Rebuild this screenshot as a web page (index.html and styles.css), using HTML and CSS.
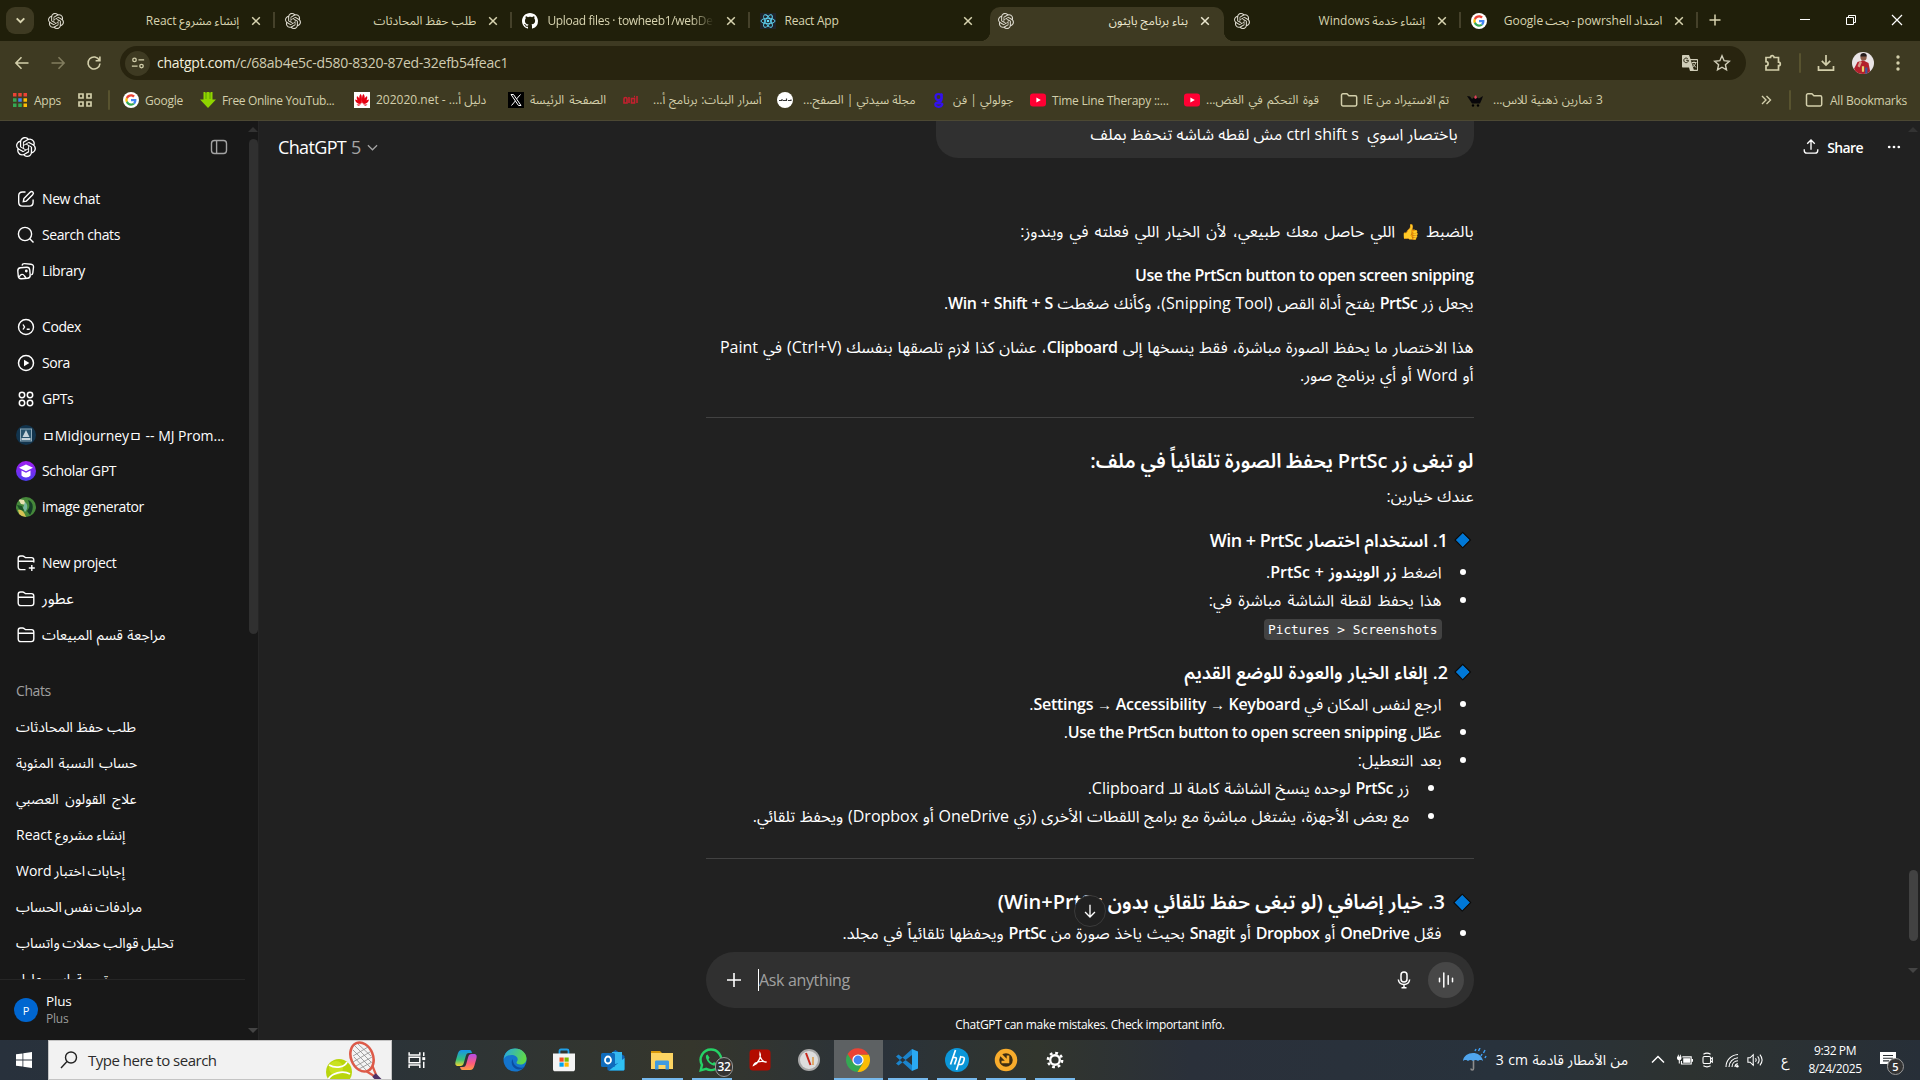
FILE: index.html
```html
<!DOCTYPE html>
<html lang="en">
<head>
<meta charset="utf-8">
<title>بناء برنامج بايثون</title>
<link rel="stylesheet" href="styles.css">
</head>
<body>
<svg class="sprite" aria-hidden="true">
  <symbol id="openai" viewBox="0 0 24 24"><path fill="currentColor" d="M22.2819 9.8211a5.9847 5.9847 0 0 0-.5157-4.9108 6.0462 6.0462 0 0 0-6.5098-2.9A6.0651 6.0651 0 0 0 4.9807 4.1818a5.9847 5.9847 0 0 0-3.9977 2.9 6.0462 6.0462 0 0 0 .7427 7.0966 5.98 5.98 0 0 0 .511 4.9107 6.051 6.051 0 0 0 6.5146 2.9001A5.9847 5.9847 0 0 0 13.2599 24a6.0557 6.0557 0 0 0 5.7718-4.2058 5.9894 5.9894 0 0 0 3.9977-2.9001 6.0557 6.0557 0 0 0-.7475-7.0729zm-9.022 12.6081a4.4755 4.4755 0 0 1-2.8764-1.0408l.1419-.0804 4.7783-2.7582a.7948.7948 0 0 0 .3927-.6813v-6.7369l2.02 1.1686a.071.071 0 0 1 .038.052v5.5826a4.504 4.504 0 0 1-4.4945 4.4944zm-9.6607-4.1254a4.4708 4.4708 0 0 1-.5346-3.0137l.142.0852 4.783 2.7582a.7712.7712 0 0 0 .7806 0l5.8428-3.3685v2.3324a.0804.0804 0 0 1-.0332.0615L9.74 19.9502a4.4992 4.4992 0 0 1-6.1408-1.6464zM2.3408 7.8956a4.485 4.485 0 0 1 2.3655-1.9728V11.6a.7664.7664 0 0 0 .3879.6765l5.8144 3.3543-2.0201 1.1685a.0757.0757 0 0 1-.071 0l-4.8303-2.7865A4.504 4.504 0 0 1 2.3408 7.872zm16.5963 3.8558L13.1038 8.364 15.1192 7.2a.0757.0757 0 0 1 .071 0l4.8303 2.7913a4.4944 4.4944 0 0 1-.6765 8.1042v-5.6772a.79.79 0 0 0-.407-.667zm2.0107-3.0231l-.142-.0852-4.7735-2.7818a.7759.7759 0 0 0-.7854 0L9.409 9.2297V6.8974a.0662.0662 0 0 1 .0284-.0615l4.8303-2.7866a4.4992 4.4992 0 0 1 6.6802 4.66zM8.3065 12.863l-2.02-1.1638a.0804.0804 0 0 1-.038-.0567V6.0742a4.4992 4.4992 0 0 1 7.3757-3.4537l-.142.0805L8.704 5.459a.7948.7948 0 0 0-.3927.6813zm1.0976-2.3654l2.602-1.4998 2.6069 1.4998v2.9994l-2.5974 1.4997-2.6067-1.4997Z"/></symbol>
  <symbol id="close" viewBox="0 0 10 10"><path d="M1.2 1.2l7.6 7.6M8.8 1.2L1.2 8.8" stroke="currentColor" stroke-width="1.5" fill="none"/></symbol>
  <symbol id="google" viewBox="0 0 48 48"><circle cx="24" cy="24" r="24" fill="#fff"/><g transform="translate(7 7) scale(.71)"><path fill="#EA4335" d="M24 9.5c3.54 0 6.71 1.22 9.21 3.6l6.85-6.85C35.9 2.38 30.47 0 24 0 14.62 0 6.51 5.38 2.56 13.22l7.98 6.19C12.43 13.72 17.74 9.5 24 9.5z"/><path fill="#4285F4" d="M46.98 24.55c0-1.57-.15-3.09-.38-4.55H24v9.02h12.94c-.58 2.96-2.26 5.48-4.78 7.18l7.73 6c4.51-4.18 7.09-10.36 7.09-17.65z"/><path fill="#FBBC05" d="M10.53 28.59c-.48-1.45-.76-2.99-.76-4.59s.27-3.14.76-4.59l-7.98-6.19C.92 16.46 0 20.12 0 24c0 3.88.92 7.54 2.56 10.78l7.97-6.19z"/><path fill="#34A853" d="M24 48c6.48 0 11.93-2.13 15.89-5.81l-7.73-6c-2.15 1.45-4.92 2.3-8.16 2.3-6.26 0-11.57-4.22-13.47-9.91l-7.98 6.19C6.51 42.62 14.62 48 24 48z"/></g></symbol>
  <symbol id="folder" viewBox="0 0 18 16"><path d="M1.5 3.2c0-.8.6-1.4 1.4-1.4h4l2 2h6.400c.8 0 1.400.6 1.400 1.400v7.400c0 .8-.6 1.400-1.400 1.400H2.900c-.8 0-1.400-.6-1.400-1.400z" fill="none" stroke="currentColor" stroke-width="1.5"/></symbol>
  <symbol id="youtube" viewBox="0 0 16 16"><rect y="1.500" width="16" height="13" rx="3" fill="#f03"/><path d="M6.400 5.500v5L10.800 8z" fill="#fff"/></symbol>
  <symbol id="project" viewBox="0 0 20 20"><path d="M2.200 14V5.300c0-1.400.9-2.300 2.300-2.300h2.200c.6 0 1 .2 1.500.6l.8.6c.3.300.7.400 1.200.400h5.300c1.400 0 2.300.9 2.300 2.300V14c0 1.600-1 2.600-2.600 2.600H4.800C3.200 16.600 2.200 15.600 2.200 14zM2.200 8.300h15.600" fill="none" stroke="currentColor" stroke-width="1.400"/></symbol>
</svg>

<div class="tabstrip">
  <button class="tabsearch"><svg viewBox="0 0 12 12"><path d="M2.500 4l3.500 3.500L9.500 4" fill="none" stroke="currentColor" stroke-width="1.800"/></svg></button>
  <div class="tabs">
    <div class="tab rtl"><svg class="fav"><use href="#openai"/></svg><span class="title" dir="rtl"><span class="wn5">إنشاء مشروع React</span></span><svg class="x"><use href="#close"/></svg></div>
    <div class="tab rtl"><svg class="fav"><use href="#openai"/></svg><span class="title" dir="rtl"><span>طلب حفظ المحادثات</span></span><svg class="x"><use href="#close"/></svg></div>
    <div class="tab"><svg class="fav white" viewBox="0 0 16 16"><path fill="currentColor" d="M8 0C3.580 0 0 3.580 0 8c0 3.540 2.290 6.530 5.470 7.590.4.070.55-.17.55-.38 0-.19-.01-.82-.01-1.490-2.010.37-2.530-.49-2.690-.94-.09-.23-.48-.94-.82-1.130-.28-.15-.68-.52-.01-.53.63-.01 1.080.58 1.230.82.72 1.210 1.870.87 2.330.66.07-.52.28-.87.51-1.070-1.780-.2-3.640-.89-3.640-3.950 0-.87.31-1.590.82-2.150-.08-.2-.36-1.020.08-2.120 0 0 .67-.21 2.200.82.64-.18 1.320-.27 2-.27s1.360.09 2 .27c1.530-1.040 2.200-.82 2.200-.82.44 1.100.16 1.920.08 2.120.51.56.82 1.270.82 2.150 0 3.070-1.870 3.750-3.650 3.950.29.25.54.73.54 1.480 0 1.070-.01 1.930-.01 2.200 0 .21.15.46.55.38A8.010 8.010 0 0 0 16 8c0-4.420-3.580-8-8-8z"/></svg><span class="title fade"><span>Upload files · towheeb1/webDe</span></span><svg class="x"><use href="#close"/></svg></div>
    <div class="tab nosep"><svg class="fav react" viewBox="0 0 16 16"><rect width="16" height="16" fill="#20232a"/><g fill="none" stroke="#61dafb" stroke-width=".9"><ellipse cx="8" cy="8" rx="7" ry="2.700"/><ellipse cx="8" cy="8" rx="7" ry="2.700" transform="rotate(60 8 8)"/><ellipse cx="8" cy="8" rx="7" ry="2.700" transform="rotate(120 8 8)"/></g><circle cx="8" cy="8" r="1.300" fill="#61dafb"/></svg><span class="title"><span>React App</span></span><svg class="x"><use href="#close"/></svg></div>
    <div class="tab active nosep rtl"><svg class="fav"><use href="#openai"/></svg><span class="title" dir="rtl"><span>بناء برنامج بايثون</span></span><svg class="x"><use href="#close"/></svg></div>
    <div class="tab rtl"><svg class="fav"><use href="#openai"/></svg><span class="title" dir="rtl"><span class="wn5">إنشاء خدمة Windows</span></span><svg class="x"><use href="#close"/></svg></div>
    <div class="tab rtl"><svg class="fav"><use href="#google"/></svg><span class="title" dir="rtl"><span class="wn10">امتداد powrshell - بحث Google</span></span><svg class="x"><use href="#close"/></svg></div>
  </div>
  <svg class="newtab" viewBox="0 0 12 12"><path d="M6 .5v11M.5 6h11" stroke="currentColor" stroke-width="1.500"/></svg>
  <div class="winctl">
    <svg viewBox="0 0 12 12"><path d="M1 5.500h10" stroke="currentColor"/></svg>
    <svg viewBox="0 0 12 12"><path d="M1.500 3.500h7v7h-7zM3.500 3.500v-2h7v7h-2" fill="none" stroke="currentColor"/></svg>
    <svg viewBox="0 0 12 12"><path d="M1 1l10 10M11 1L1 11" stroke="currentColor" stroke-width="1.200"/></svg>
  </div>
</div>

<div class="toolbar">
  <svg class="nav" viewBox="0 0 16 16"><path d="M14.500 8H2M7.500 2.300L1.900 8l5.600 5.700" fill="none" stroke="currentColor" stroke-width="1.600"/></svg>
  <svg class="nav dim" viewBox="0 0 16 16"><path d="M1.500 8H14M8.500 2.300L14.100 8l-5.600 5.700" fill="none" stroke="currentColor" stroke-width="1.600"/></svg>
  <svg class="nav" viewBox="0 0 16 16"><path d="M13.400 5.300A6 6 0 1 0 14 8.500M13.900 1.500v4.300H9.600" fill="none" stroke="currentColor" stroke-width="1.600"/></svg>
  <div class="omnibox">
    <span class="chip"><svg viewBox="0 0 16 16"><g fill="none" stroke="currentColor" stroke-width="1.500"><circle cx="4" cy="4.500" r="2"/><path d="M8.500 4.500H15M1 11.500h6.500"/><circle cx="12" cy="11.500" r="2"/></g></svg></span>
    <span class="url"><b>chatgpt.com</b>/c/68ab4e5c-d580-8320-87ed-32efb54feac1</span>
    <svg class="oi" viewBox="0 0 18 18"><path d="M2 1h6l1.500 4H16c.6 0 1 .4 1 1v10c0 .6-.4 1-1 1H9l-1-3.500H2c-.6 0-1-.4-1-1V2c0-.6.400-1 1-1z" fill="currentColor"/><path d="M9.800 6.200l3 9.600H16V6.200z" fill="#28240f"/><path d="M7.400 6.300H5.200M7.400 6.400A2.300 2.300 0 1 1 6.700 4.700" stroke="#28240f" fill="none"/><path d="M10.800 8.500h4.700M13 7.500v1M14.700 8.500c-.3 2-1.500 3.500-3 4.500M11.800 9.500c.6 1.500 1.800 2.800 3.400 3.800" stroke="currentColor" fill="none"/></svg>
    <svg class="oi" viewBox="0 0 18 18"><path d="M9 1.800l2.100 4.900 5.200.5-3.900 3.500 1.100 5.200L9 13.200l-4.500 2.700 1.100-5.200-3.900-3.500 5.200-.5z" fill="none" stroke="currentColor" stroke-width="1.400"/></svg>
  </div>
  <div class="tools">
    <svg viewBox="0 0 18 18"><path d="M2 3.500h4.500a1.800 1.800 0 0 1 3.600 0h4.400v4.600a1.800 1.800 0 0 1 0 3.600v4.300H2v-4.200a2.100 2.100 0 0 0 0-4.200z" fill="none" stroke="currentColor" stroke-width="1.700"/></svg>
    <i class="vsep"></i>
    <svg viewBox="0 0 18 18"><path d="M9 1v9.500M4.800 6.800L9 11l4.200-4.200M1.500 12v4.200h15V12" fill="none" stroke="currentColor" stroke-width="1.700"/></svg>
    <svg class="me" viewBox="0 0 20 20"><clipPath id="mc"><circle cx="10" cy="10" r="10"/></clipPath><g clip-path="url(#mc)"><path fill="#e9e4e6" d="M0 0h20v20H0z"/><path fill="#b3202c" d="M5 9l5-1.500L15 10l2 10H3l-1-5z"/><circle cx="10.500" cy="5" r="2.800" fill="#8a5a48"/><path fill="#251c1c" d="M7.500 4c0-4 6-4 6 0z"/><path fill="#d79a88" d="M7 8l2 1-2 5-2-1z"/><path fill="#e8d36c" d="M9 13h2v5H9z"/><path fill="#3c55a0" d="M12 14h2v6h-2z"/></g></svg>
    <svg viewBox="0 0 18 18"><g fill="currentColor"><circle cx="9" cy="3" r="1.700"/><circle cx="9" cy="9" r="1.700"/><circle cx="9" cy="15" r="1.700"/></g></svg>
  </div>
</div>

<div class="bookmarks">
  <span class="bm"><svg viewBox="0 0 16 16"><path fill="#ea4335" d="M1 1h3.500v3.500H1zM6.250 1h3.500v3.500h-3.500zM11.500 1H15v3.500h-3.500z"/><path fill="#34a853" d="M1 6.250h3.500v3.500H1zM1 11.500h3.500V15H1z"/><path fill="#4285f4" d="M6.250 6.250h3.500v3.500h-3.500z"/><path fill="#34a853" d="M6.250 11.500h3.500V15h-3.500z"/><path fill="#fbbc05" d="M11.500 6.250H15v3.500h-3.500zM11.500 11.500H15V15h-3.500z"/></svg><span>Apps</span></span>
  <span class="bm"><svg viewBox="0 0 16 16"><path d="M2 2h4v4H2zM10 2h4v4h-4zM2 10h4v4H2zM10 10h4v4h-4z" fill="none" stroke="currentColor" stroke-width="1.700"/></svg></span>
  <i class="vsep"></i>
  <span class="bm"><svg><use href="#google"/></svg><span>Google</span></span>
  <span class="bm"><svg viewBox="0 0 16 16"><path fill="#8fd400" d="M3.500 0h2v1h1V0h3v1h1V0h2v7.500H16L8 16 0 7.500h3.500z"/><path fill="#5f9e00" d="M5.500 1h1v6h-1zM9.500 1h1v6h-1z"/></svg><span class="snug">Free Online YouTub...</span></span>
  <span class="bm"><svg viewBox="0 0 16 16"><path fill="#fff" d="M0 0h16v16H0z"/><g fill="#e60012"><path d="M7.700 11.500C5 9 4.500 4 6.500 2c1.500 1 1.800 5 1.200 9.500zM8.300 11.500C11 9 11.500 4 9.500 2 8 3 7.700 7 8.300 11.500zM7.200 11.700C3.500 9.500 2 6.500 3 4c2.500 1.500 3.700 4.500 4.200 7.700zM8.800 11.700C12.500 9.500 14 6.500 13 4c-2.500 1.500-3.700 4.500-4.200 7.700zM6.800 12C3.500 12 1.300 10 1 7.500c2.700.4 4.800 2.200 5.800 4.500zM9.200 12c3.300 0 5.500-2 5.800-4.500-2.700.4-4.800 2.200-5.800 4.500zM7 12.500c-1.500 1.500-3.500 1.500-4.500 0zM9 12.500c1.500 1.500 3.500 1.500 4.500 0z"/></g></svg><span class="ar" dir="ltr">202020.net - دليل أ...&rlm;</span></span>
  <span class="bm"><svg viewBox="0 0 16 16"><path d="M0 0h16v16H0z"/><path d="M3 2.500h2.500l7.500 11h-2.500zM12.500 2.500l-4 4.500M3.500 13.500l4-4.700" stroke="#fff" fill="none"/></svg><span class="ws20" dir="rtl">الصفحة الرئيسة</span></span>
  <span class="bm far"><svg viewBox="0 0 16 16"><path d="M1 7c0-2 3-2 3 0v4H1zM6 5v6M8.500 6.500h3v4.500h-3zM14 4v7M11 4.500h1" fill="none" stroke="#c4202f" stroke-width="1.600"/></svg><span class="ws5" dir="rtl">أسرار البنات: برنامج أ...</span></span>
  <span class="bm mid"><svg viewBox="0 0 16 16"><circle cx="8" cy="8" r="8" fill="#fff"/><path d="M2 8.500h3V7m1 1.500h3.500V6.500M11 8.500h3V7.500" stroke="#333" stroke-width="1.200" fill="none"/></svg><span dir="rtl">مجلة سيدتي | الصفح...</span></span>
  <span class="bm"><svg viewBox="0 0 16 16"><g fill="none" stroke="#3311ee" stroke-width="2.200"><circle cx="7.500" cy="5" r="3"/><path d="M11 1.500c-1 2 .5 5-1 7.500-1.500 1.500-5 1-5.500 2.500h6c1.500 0 1 3-2.500 3.300-3 .2-4-1.300-3.200-2.500"/></g></svg><span dir="rtl">جولولي | فن</span></span>
  <span class="bm"><svg><use href="#youtube"/></svg><span>Time Line Therapy ::...</span></span>
  <span class="bm"><svg><use href="#youtube"/></svg><span class="ws15" dir="rtl">قوة التحكم في الغض...</span></span>
  <span class="bm wide"><svg><use href="#folder"/></svg><span dir="rtl">تمّ الاستيراد من IE</span></span>
  <span class="bm mid"><svg viewBox="0 0 16 16"><path fill="#08070a" d="M0 4l3 .5 2 2.500 3-2.500 4 2 4-2.500-1 3-2 4.500H5L2 7z"/><path fill="#e0405a" d="M7 5l2-2 1 3-2 1z"/><circle cx="6" cy="13.500" r="1.200"/><circle cx="11" cy="13.500" r="1.200"/></svg><span class="ws5" dir="rtl">3 تمارين ذهنية للاس...</span></span>
  <svg class="more" viewBox="0 0 12 12"><path d="M2 2l4 4-4 4M6.500 2l4 4-4 4" fill="none" stroke="currentColor" stroke-width="1.400"/></svg>
  <i class="vsep"></i>
  <span class="bm wide last"><svg><use href="#folder"/></svg><span>All Bookmarks</span></span>
</div>

<div class="app">
  <aside class="sidebar">
    <div class="side-main">
      <div class="side-list">
        <div class="side-head"><svg class="logo"><use href="#openai"/></svg><svg class="panel" viewBox="0 0 20 20"><rect x="2.500" y="3.500" width="15" height="13" rx="3" fill="none" stroke="currentColor" stroke-width="1.400"/><path d="M7.600 3.500v13" stroke="currentColor" stroke-width="1.400"/></svg></div>
        <nav class="group">
          <a><svg viewBox="0 0 20 20"><g fill="none" stroke="currentColor" stroke-width="1.400"><path d="M9.500 3H6.500C4 3 2.700 4.300 2.700 6.800v6.500c0 2.500 1.300 3.800 3.800 3.800h6.800c2.500 0 3.800-1.300 3.800-3.800v-2.900"/><path d="M7.300 12.700l.6-3.100 6.200-6.300c.9-.9 2-.9 2.700-.2.800.8.800 1.800-.1 2.700l-6.300 6.300z"/></g></svg><span>New chat</span></a>
          <a><svg viewBox="0 0 20 20"><g fill="none" stroke="currentColor" stroke-width="1.400"><circle cx="9" cy="9" r="6.600"/><path d="M13.800 13.800l3.700 3.700"/></g></svg><span>Search chats</span></a>
          <a><svg viewBox="0 0 20 20"><g fill="none" stroke="currentColor" stroke-width="1.400"><rect x="2" y="6.500" width="12" height="11" rx="3" transform="rotate(-5 8 12)"/><path d="M6 4.500c.3-1.400 1.200-2 2.600-1.900l6.400.6c1.800.2 2.700 1.300 2.500 3l-.7 5.800c-.1 1-.7 1.700-1.600 1.900M3 16c2-3.300 4-3.400 5.500-1l1.500 2"/><circle cx="10.300" cy="10" r=".7"/></g></svg><span>Library</span></a>
        </nav>
        <nav class="group">
          <a><svg viewBox="0 0 20 20"><g fill="none" stroke="currentColor" stroke-width="1.400"><circle cx="10" cy="10" r="7.500"/><path d="M7 7.500L8.500 10 7 12.500M10.700 12.300h3"/></g></svg><span>Codex</span></a>
          <a><svg viewBox="0 0 20 20"><circle cx="10" cy="10" r="7.500" fill="none" stroke="currentColor" stroke-width="1.500"/><path fill="currentColor" d="M8 6.700v6.600l5.400-3.300z"/></svg><span>Sora</span></a>
          <a><svg viewBox="0 0 20 20"><g fill="none" stroke="currentColor" stroke-width="1.500"><circle cx="6" cy="6" r="2.700"/><circle cx="14" cy="6" r="2.700"/><circle cx="6" cy="14" r="2.700"/><circle cx="14" cy="14" r="2.700"/></g></svg><span>GPTs</span></a>
          <a><svg viewBox="0 0 20 20"><circle cx="10" cy="10" r="10" fill="#12344d"/><rect x="4.500" y="4" width="11" height="12" fill="#27536d" stroke="#8ea9b9"/><path d="M10 5l3.500 7h-7zM5.500 13h9v2h-9z" fill="#c5d3db"/></svg><span class="loose">ㅁMidjourneyㅁ -- MJ Prom...</span></a>
          <a><svg viewBox="0 0 20 20"><defs><linearGradient id="sg" x2="0" y2="1"><stop stop-color="#a31df0"/><stop offset="1" stop-color="#4b3cf0"/></linearGradient></defs><circle cx="10" cy="10" r="10" fill="url(#sg)"/><path d="M10 3.500l7 3.300-7 3.500-7-3.500z" fill="#fff"/><path d="M5.500 9.500l4.500 2.300 4.500-2.300v5c-2 2.500-7 2.500-9 0z" fill="#fff"/></svg><span>Scholar GPT</span></a>
          <a><svg viewBox="0 0 20 20"><clipPath id="ig"><circle cx="10" cy="10" r="10"/></clipPath><g clip-path="url(#ig)"><path fill="#45883a" d="M0 0h20v20H0z"/><path fill="#e8e2b0" d="M2 2l6 1 2 5-5-1z"/><path fill="#143c28" d="M12 3c6 2 6 9 2 15l-3-4c3-3 3-7 1-11z"/><path fill="#79b8a0" d="M9 5c3 2 3 7 0 10l-2-4z"/><path fill="#d6c255" d="M2 13c4-1 6 2 8 7H4z"/><path fill="#1b5127" d="M1 8l5 1 2 5-5-2z"/></g></svg><span>image generator</span></a>
        </nav>
        <nav class="group">
          <a><svg viewBox="0 0 20 20"><g fill="none" stroke="currentColor" stroke-width="1.400"><path d="M9.500 16.600H4.800C3.200 16.600 2.200 15.600 2.200 14V5.300c0-1.400.9-2.300 2.300-2.300h2.200c.6 0 1 .2 1.500.6l.8.6c.3.300.7.400 1.200.400h5.300c1.400 0 2.300.9 2.300 2.300v2.600M2.200 8.300h15.600M15.800 12v6M12.800 15h6"/></g></svg><span>New project</span></a>
          <a><svg><use href="#project"/></svg><span class="bigger" dir="rtl">عطور</span></a>
          <a><svg><use href="#project"/></svg><span class="ws10" dir="rtl">مراجعة قسم المبيعات</span></a>
        </nav>
        <nav class="group">
          <a class="label"><span>Chats</span></a>
          <a><span dir="rtl">طلب حفظ المحادثات</span></a>
          <a><span class="ws15" dir="rtl">حساب النسبة المئوية</span></a>
          <a><span class="ws30" dir="rtl">علاج القولون العصبي</span></a>
          <a><span class="wn5" dir="rtl">إنشاء مشروع React</span></a>
          <a><span class="wn10" dir="rtl">إجابات اختبار Word</span></a>
          <a><span class="wn10" dir="rtl">مرادفات نفس الحساب</span></a>
          <a><span class="wn10" dir="rtl">تحليل قوالب حملات واتساب</span></a>
          <a><span class="ws20" dir="rtl">ترجمة اسم علياء</span></a>
        </nav>
      </div>
      <div class="account"><span class="avatar">P</span><div><p>Plus</p><p class="plan">Plus</p></div></div>
    </div>
    <div class="side-scroll"><i class="up"></i><i class="thumb"></i><i class="down"></i></div>
  </aside>

  <main class="main">
    <header class="top">
      <div class="model">ChatGPT <span>5</span><svg viewBox="0 0 12 12"><path d="M1 3.500l5 5 5-5" fill="none" stroke="currentColor" stroke-width="1.300"/></svg></div>
      <div class="share"><svg viewBox="0 0 20 20"><path d="M10 13V2.500M5.800 6.500L10 2.300l4.200 4.200M2.500 12.500v1.300c0 2 1 3 3 3h9c2 0 3-1 3-3v-1.300" fill="none" stroke="currentColor" stroke-width="1.500"/></svg><b>Share</b><svg class="dots" viewBox="0 0 20 20"><g fill="currentColor"><circle cx="4" cy="10" r="1.700"/><circle cx="10" cy="10" r="1.700"/><circle cx="16" cy="10" r="1.700"/></g></svg></div>
    </header>
    <div class="thread" dir="rtl">
      <div class="bubble"><span>باختصار اسوي&nbsp; ctrl shift s مش لقطه شاشه تنحفظ بملف</span></div>
      <article>
        <p><span class="ws20">بالضبط <span class="emoji">👍</span> اللي حاصل معك طبيعي، لأن الخيار اللي فعلته في ويندوز:</span></p>
        <p><b>Use the PrtScn button to open screen snipping</b><br><span class="ws5">يجعل زر <b>PrtSc</b> يفتح أداة القص (Snipping Tool)، وكأنك ضغطت <b>Win + Shift + S</b>.</span></p>
        <p><span class="ws10">هذا الاختصار ما يحفظ الصورة مباشرة، فقط ينسخها إلى <b>Clipboard</b>، عشان كذا لازم تلصقها بنفسك (Ctrl+V) في Paint</span><br><span class="ws10">أو Word أو أي برنامج صور.</span></p>
        <hr>
        <h2 class="wn5">لو تبغى زر PrtSc يحفظ الصورة تلقائياً في ملف:</h2>
        <p><span class="ws5">عندك خيارين:</span></p>
        <h3><i class="gem"></i><span>1. استخدام اختصار <bdi>Win + PrtSc</bdi></span></h3>
        <ul>
          <li><span class="ws5">اضغط <b class="ar">زر الويندوز + PrtSc</b>.</span></li>
          <li><span class="ws20">هذا يحفظ لقطة الشاشة مباشرة في:</span><br><code>Pictures &gt; Screenshots</code></li>
        </ul>
        <h3><i class="gem"></i><span class="ws5">2. إلغاء الخيار والعودة للوضع القديم</span></h3>
        <ul>
          <li><span>ارجع لنفس المكان في <b class="path" dir="ltr">Settings <i>→</i> Accessibility <i>→</i> Keyboard</b>.</span></li>
          <li><span>عطّل <b>Use the PrtScn button to open screen snipping</b>.</span></li>
          <li><span class="ws30">بعد التعطيل:</span>
            <ul>
              <li><span class="ws5">زر <b>PrtSc</b> لوحده ينسخ الشاشة كاملة للـ Clipboard.</span></li>
              <li><span class="ws5">مع بعض الأجهزة، يشتغل مباشرة مع برامج اللقطات الأخرى (زي OneDrive أو Dropbox) ويحفظ تلقائي.</span></li>
            </ul>
          </li>
        </ul>
        <hr>
        <h2 class="numbered"><i class="gem big"></i><span>3. خيار إضافي (لو تبغى حفظ تلقائي بدون Win+PrtSc)</span></h2>
        <ul>
          <li><span class="ws8">فعّل <b>OneDrive</b> أو <b>Dropbox</b> أو <b>Snagit</b> بحيث ياخذ صورة من <b>PrtSc</b> ويحفظها تلقائياً في مجلد.</span></li>
        </ul>
      </article>
    </div>
    <div class="dock">
      <button class="jump"><svg viewBox="0 0 20 20"><path d="M10 3v13.500M4.500 11.200L10 16.700l5.500-5.500" fill="none" stroke="currentColor" stroke-width="1.500"/></svg></button>
      <div class="composer">
        <svg viewBox="0 0 20 20"><path d="M10 3v14M3 10h14" stroke="currentColor" stroke-width="1.600"/></svg>
        <span class="ph">Ask anything</span>
        <svg viewBox="0 0 20 20"><g fill="none" stroke="currentColor" stroke-width="1.500"><rect x="7" y="2" width="6" height="10" rx="3"/><path d="M4.300 9.500c.5 3.300 2.600 5 5.700 5s5.200-1.700 5.700-5M10 14.500v3M7.500 17.700h5"/></g></svg>
        <span class="voice"><svg viewBox="0 0 20 20"><path d="M3.500 8.300v3.400M7.800 3v14M12.200 5.800v8.400M16.500 8.300v3.400" stroke="currentColor" stroke-width="1.500" stroke-linecap="round"/></svg></span>
      </div>
      <p class="note"><span>ChatGPT can make mistakes. Check important info.</span></p>
    </div>
    <div class="page-scroll"><i class="up"></i><i class="thumb"></i><i class="down"></i></div>
  </main>
</div>

<footer class="taskbar">
  <span class="start"><svg viewBox="0 0 16 16"><path fill="#fff" d="M0 2.300l6.500-.9v6.200H0zM7.300 1.300L16 0v7.600H7.300zM0 8.400h6.500v6.200L0 13.700zM7.300 8.400H16V16l-8.700-1.300z"/></svg></span>
  <div class="search">
    <svg class="mag" viewBox="0 0 18 18"><g fill="none" stroke="#222" stroke-width="1.400"><circle cx="11" cy="6.500" r="5.500"/><path d="M7 10.500L1 17"/></g></svg>
    <span>Type here to search</span>
    <svg class="sport" viewBox="0 0 60 38"><g><ellipse cx="37" cy="16" rx="11" ry="15" transform="rotate(-22 37 16)" fill="#f4f4f4" stroke="#dd5a48" stroke-width="2.600"/><g stroke="#8b8b8b" stroke-width=".8"><path d="M28 9l17 17M29 4l17 17M33 3l13 12M29 16l12 13M28 21l17-10M28 15l15-9M31 25l16-9M34 28l13-7"/></g><path d="M41 30l8 5M47.500 25l4 10" stroke="#dd5a48" stroke-width="2.200"/><path d="M49 34l6 6" stroke="#4d3166" stroke-width="5"/></g><circle cx="14" cy="31" r="13" fill="#b9d50c"/><circle cx="11" cy="27" r="7" fill="#d2e72a" opacity=".7"/><path d="M4 24c7 4 16 2 18-3M3 39c3-7 15-10 22-6" fill="none" stroke="#fff" stroke-width="1.800"/></svg>
  </div>
  <div class="pins">
    <span><svg viewBox="0 0 16 16"><g fill="none" stroke="#fff" stroke-width="1.300"><path d="M1 1v2.500h9.500V1M1 15v-2.500h9.500V15M1 5.500h9.500v5H1zM14 1v3.500M14 9.500V15"/></g><path fill="#fff" d="M12.700 5.500h2.600v2.600h-2.600z"/></svg></span>
    <span><svg class="l" viewBox="0 0 24 24"><defs><linearGradient id="c1" x2="0" y2="1"><stop stop-color="#1593ec"/><stop offset=".6" stop-color="#35c27a"/><stop offset="1" stop-color="#f5d432"/></linearGradient><linearGradient id="c2" x2="0" y2="1"><stop stop-color="#b44be8"/><stop offset=".6" stop-color="#ff5c7a"/><stop offset="1" stop-color="#ff9c45"/></linearGradient></defs><path d="M8 2h7.500c1.500 0 2 1 2.500 3h-3c-2 0-2.600 1-3.200 3l-2 7c-.5 2-1.500 3-3.500 3H4c-3 0-3-2.500-2.300-5l2-7C4.600 3.300 5.500 2 8 2z" fill="url(#c1)"/><path d="M16 22H8.500C7 22 6.500 21 6 19h3c2 0 2.600-1 3.200-3l2-7c.5-2 1.500-3 3.500-3H20c3 0 3 2.500 2.300 5l-2 7c-.9 2.700-1.800 4-4.300 4z" fill="url(#c2)"/></svg></span>
    <span><svg class="l" viewBox="0 0 24 24"><defs><linearGradient id="e1" y2=".3"><stop stop-color="#23a5e8"/><stop offset="1" stop-color="#5fd84a"/></linearGradient></defs><circle cx="12" cy="12" r="11.500" fill="#1474cc"/><path d="M.8 11C1.500 4.500 6 .5 12 .5c7 0 11.500 5 11.500 10 0 4-3 6-6 6-2.500 0-4-1-4-2s1.200-1.300 1.200-3.300C14.700 9 12 7 8.500 7 5 7 2 8.500.8 11z" fill="url(#e1)"/><path d="M9.500 11c-2.500 4.500 1 10.500 6.500 10.500 2 0 4-.8 6-2.500-4 1.500-11.500 1-12.500-8z" fill="#0c4da0"/></svg></span>
    <span><svg class="l" viewBox="0 0 24 24"><path d="M7.500 6V3c0-1 .5-1.500 1.500-1.500h6c1 0 1.500.5 1.500 1.500v3" fill="none" stroke="#20a0e8" stroke-width="1.800"/><path d="M1 5.500h22V21c0 1.500-.8 2.300-2.300 2.300H3.300C1.800 23.300 1 22.500 1 21z" fill="#f4f4f4"/><path fill="#f25022" d="M7.500 9.500h4.200v4.200H7.500z"/><path fill="#7fba00" d="M12.500 9.500h4.200v4.200h-4.200z"/><path fill="#00a4ef" d="M7.500 14.500h4.200v4.200H7.500z"/><path fill="#ffb900" d="M12.500 14.500h4.200v4.200h-4.200z"/></svg></span>
    <span><svg class="l" viewBox="0 0 24 24"><path d="M6 8l8.500-6L23.500 8v13c0 1-.6 1.600-1.600 1.600H8c-1 0-1.600-.6-1.600-1.600z" fill="#1066b8"/><path d="M11 4h10v10l-10 3z" fill="#35b8f0"/><path d="M23.500 10v11c0 1-.6 1.600-1.600 1.600H8L23.500 10z" fill="#2fc0f2"/><rect y="5" width="14" height="14" rx="1.500" fill="#0f6cbd"/><ellipse cx="7" cy="12" rx="3" ry="3.500" fill="none" stroke="#fff" stroke-width="1.800"/></svg></span>
    <span class="run"><svg class="l" viewBox="0 0 24 24"><path d="M1 3h9l2 2H1z" fill="#d99a0a"/><path d="M1 5h22v16H1z" fill="#fcd462"/><path d="M5 14c0-1 .5-1.500 1.500-1.500h11c1 0 1.500.5 1.500 1.500v7.500h-3.500V17h-7v4.500H5z" fill="#3f9be0"/></svg></span>
    <span class="run"><svg class="l" viewBox="0 0 24 24"><path d="M12 1.500a10.300 10.300 0 0 0-9 15.400L1.700 22.300l5.500-1.400A10.300 10.300 0 1 0 12 1.500z" fill="none" stroke="#25d366" stroke-width="2.400"/><path d="M8.500 6.500c-1.500.3-2 2-1.300 4 1.200 3.500 4 6.200 7.300 7 2 .3 3-.7 3.200-2l-2.700-1.600-1.300 1.400c-2-.9-3.300-2.300-4.200-4.100l1.100-1.500z" fill="#25d366"/></svg><em class="badge">32</em></span>
    <span><svg class="l" viewBox="0 0 24 24"><rect x="1.500" y="1.500" width="21" height="21" rx="3.500" fill="#b30b00"/><path d="M5.500 17.500c1-3.500 7-5 13-3.500-4 .8-7-5-6.500-8.500 1.200 3-1.500 10-6.500 12z" fill="none" stroke="#fff" stroke-width="1.300"/></svg></span>
    <span><svg class="l" viewBox="0 0 24 24"><circle cx="12" cy="12" r="11" fill="#a8a8a8"/><circle cx="12" cy="12" r="9" fill="#ddd"/><path d="M9 5l4.500 12" stroke="#c8271c" stroke-width="2"/><path d="M16 9v8" stroke="#dd9740" stroke-width="1.500"/></svg></span>
    <span class="run on"><svg class="l" viewBox="0 0 24 24"><path d="M12 12L1.600 6A12 12 0 0 0 11.500 24L17 15z" fill="#34a853"/><path d="M12 12V6.500h10.700A12 12 0 0 1 11.500 24L17 15z" fill="#fbbc05"/><path d="M1.600 6A12 12 0 0 1 22.500 6.500H12L7 14.500z" fill="#ea4335"/><circle cx="12" cy="12" r="5.600" fill="#fff"/><circle cx="12" cy="12" r="4.400" fill="#4285f4"/></svg></span>
    <span class="run"><svg class="l" viewBox="0 0 24 24"><path d="M17 1l6 2.500v17L17 23z" fill="#2aa9f3"/><path d="M17 1v6L3.500 17.500 1 15.500zM17 23v-6L3.500 6.500 1 8.500z" fill="#1b84cc"/></svg></span>
    <span class="run"><svg class="l" viewBox="0 0 24 24"><circle cx="12" cy="12" r="12" fill="#0b96d8"/><path d="M10.500 2L5.500 16.500M8 9.500h2c1.500 0 1.500 1 1.200 2l-1.700 5M16 8L11.500 22M15.500 9h2c2 0 2 1.500 1.500 3-.7 3-1.300 4.500-3 4.500h-2.500" fill="none" stroke="#fff" stroke-width="1.700"/></svg></span>
    <span class="run"><svg class="l" viewBox="0 0 24 24"><circle cx="12" cy="12" r="9" fill="#3d2c12" stroke="#f8ac2c" stroke-width="4.500"/><path d="M5 5l8 8M14 7.500V14H7.500" stroke="#f8ac2c" stroke-width="2.600" fill="none"/></svg></span>
    <span class="run"><svg viewBox="0 0 20 20"><circle cx="10" cy="10" r="5.300" fill="none" stroke="#fff" stroke-width="2.600"/><circle cx="10" cy="10" r="7.900" fill="none" stroke="#fff" stroke-width="2.800" stroke-dasharray="3.100 3.100"/></svg></span>
  </div>
  <div class="tray">
    <svg class="umb" viewBox="0 0 24 24"><path d="M10.500 8v12.500c0 2-2.500 2-2.500 0" fill="none" stroke="#8c8c8c" stroke-width="1.600"/><path d="M0 13C1 3 18 2 20 13c-1-1.500-4-1.500-5 0-1.500-1.500-3.500-1.500-5 0-1.500-1.500-3.500-1.500-5 0-1-1.500-4-1.500-5 0z" fill="#4fa5ee"/><path d="M13 1l-1 2M17 0l-1.500 3M22 2l-1.500 3M19 6l-1 2M23 8l-1 2" stroke="#3f9df0" stroke-width="1.500"/></svg>
    <span class="weather ws10" dir="rtl">من الأمطار قادمة <bdi dir="ltr">3 cm</bdi></span>
    <svg class="t1" viewBox="0 0 16 16"><path d="M2 10.500l6-6 6 6" fill="none" stroke="#fff" stroke-width="1.500"/></svg>
    <svg viewBox="0 0 18 16"><path d="M6 4.500h10v8H5V9" fill="none" stroke="#fff" stroke-width="1.200"/><path d="M7 6h8v5.200H7zM16.500 7H18v3h-1.500zM0 4h5v2c0 1-.8 2-1.800 2.200V12H2V8.200C.8 8 0 7 0 6zM1 2h1v2H1zM3.300 2h1v2h-1z" fill="#fff"/></svg>
    <svg viewBox="0 0 16 18"><path d="M4 2.500c2.500-1.500 5.500-1.500 8 0M4 15.500c2.500 1.500 5.500 1.500 8 0M5 5h5.500c1 0 1.500.5 1.500 1.500v5c0 1-.5 1.500-1.500 1.500H5c-1 0-1.500-.5-1.500-1.500v-5C3.500 5.500 4 5 5 5zM12 8l2-1.500v5L12 10" fill="none" stroke="#fff" stroke-width="1.200"/></svg>
    <svg viewBox="0 0 16 16"><g fill="none" stroke="#fff" stroke-width="1.100"><path d="M2 15C2 8 7 3 14 2.500M5 15c0-5 4-9 9-9.300M8 15c0-3.500 2.500-6 6-6.200M11 15c0-2 1-3 3-3.200"/></g><circle cx="13.300" cy="14.300" r="1.300" fill="#fff"/></svg>
    <svg viewBox="0 0 18 16"><path d="M1 5.500h2.500L7 2v12l-3.500-3.500H1zM9.500 6c1 1.200 1 2.800 0 4M12 4c2 2.400 2 5.600 0 8M14.500 2c3 3.600 3 8.400 0 12" fill="none" stroke="#fff" stroke-width="1.200"/></svg>
    <span class="lang">ع</span>
    <div class="clock"><span>9:32 PM</span><span>8/24/2025</span></div>
    <span class="notif"><svg viewBox="0 0 18 18"><path d="M1 1h16v12h-5l-3.500 4v-4H1z" fill="#fff"/><path d="M4 4.500h10M4 7.200h10M4 9.900h6" stroke="#2b3034" stroke-width="1.100"/></svg><em class="badge">5</em></span>
  </div>
</footer>
</body>
</html>
```
FILE: styles.css
```css
* { box-sizing: border-box; }
body {
  margin: 0; width: 1920px; height: 1080px; overflow: hidden;
  display: flex; flex-direction: column;
  background: #212121; color: #fff;
  font-family: "Open Sans", "Noto Sans Arabic", "DejaVu Sans", "Noto Sans CJK KR", sans-serif;
  font-size: 12px;
}
p, h2, h3, ul { margin: 0; padding: 0; }
button { border: 0; padding: 0; color: inherit; font: inherit; }
svg { flex: none; display: block; }
i, em { font-style: normal; }
span { white-space: nowrap; }
.sprite { position: absolute; width: 0; height: 0; }
.vsep { width: 2px; height: 20px; background: #58532f; border-radius: 1px; }

/* word spacing steps */
.wn10 { word-spacing: -1.1px; }
.wn5 { word-spacing: -.5px; }
.ws5 { word-spacing: .6px; }
.ws8 { word-spacing: .75px; }
.ws10 { word-spacing: .85px; }
.ws15 { word-spacing: 1.5px; }
.ws20 { word-spacing: 2px; }
.ws30 { word-spacing: 3px; }

/* tab strip */
.tabstrip { height: 41px; background: #201f0a; display: flex; color: #d8d4b0; }
.tabsearch { width: 28px; height: 27px; margin: 7px 4px 0 6px; border-radius: 9px; background: #3e3a22; display: grid; place-items: center; }
.tabsearch svg { width: 13px; height: 13px; }
.tabs { display: flex; padding-top: 7px; }
.tab { width: 237.2px; height: 34px; display: flex; align-items: center; padding: 0 14px 7px 10px; position: relative; }
.tab:not(.nosep)::after { content: ""; position: absolute; right: 0; top: 5px; width: 2px; height: 16px; background: #45412a; }
.tab .fav { width: 16px; height: 16px; color: #dedbd0; }
.tab .fav.white { color: #fff; }
.tab .title { flex: 1; margin: 0 12px 0 9px; overflow: hidden; letter-spacing: -.25px; line-height: 20px; }
.tab.rtl .title { letter-spacing: 0; }
.tab .title.fade { letter-spacing: -.32px; mask-image: linear-gradient(90deg, #000 86%, transparent); }
.tab .x { width: 10px; height: 10px; }
.tab.active { width: 234.2px; margin-left: 3px; padding-left: 8px; background: #3e3a22; border-radius: 10px 10px 0 0; color: #ece8d0; }
.tab.active::before { content: ""; position: absolute; left: -10px; right: -10px; bottom: 0; height: 10px;
  background: radial-gradient(circle at 0 0, transparent 10px, #3e3a22 10.500px) left / 10px 10px no-repeat,
    radial-gradient(circle at 100% 0, transparent 10px, #3e3a22 10.500px) right / 10px 10px no-repeat; }
.newtab { width: 12px; height: 12px; margin: 14px 0 0 11px; }
.winctl { margin-left: auto; display: flex; gap: 34px; padding: 14px 17px 0 0; color: #fff; }
.winctl svg { width: 12px; height: 12px; }

/* toolbar */
.toolbar { height: 44px; background: #3e3a22; display: flex; align-items: center; padding: 0 13px 0 14px; color: #d3cfab; }
.nav { width: 16px; height: 16px; margin-right: 20px; }
.nav.dim { color: #827d5f; }
.omnibox { width: 1626px; height: 34px; border-radius: 17px; background: #28240f; display: flex; align-items: center; padding: 0 15px 0 5px; margin-left: -2px; font-size: 14px; }
.chip { width: 25px; height: 25px; border-radius: 50%; background: #3e3a22; display: grid; place-items: center; }
.chip svg { width: 14px; height: 14px; }
.url { flex: 1; margin-left: 7px; padding-bottom: 1px; color: #d0ccb2; letter-spacing: -.26px; }
.url b { font-weight: 400; letter-spacing: inherit; color: #f3f0dd; }
.oi { width: 18px; height: 18px; margin-left: 14px; color: #d0cdb8; }
.tools { flex: 1; display: flex; align-items: center; justify-content: space-between; padding-left: 18px; }
.tools svg { width: 18px; height: 18px; }
.tools .me { width: 22px; height: 22px; margin: 0 -1px 0 0; }

/* bookmarks */
.bookmarks { height: 36px; background: #3e3a22; border-bottom: 1px solid #4c4833; display: grid; align-items: center; padding: 0 0 5px 12px; color: #d3cfab;
  grid-template-columns: 65px 31px 15px 77px 154px 154px 115px 154px 154px 99px 154px 156px 127px 293px 29px 16px 1fr; }
.bm { display: flex; align-items: center; gap: 6px; letter-spacing: -.22px; }
.bm .snug { letter-spacing: -.35px; }
.bm [dir] { letter-spacing: 0; }
.bm svg { width: 16px; height: 16px; }
.bm.wide svg { width: 18px; margin-right: -1px; }
.bm.last { gap: 8px; }
.bm.mid { gap: 10px; }
.bm.far { gap: 14px; }
.more { width: 12px; height: 12px; }

/* sidebar */
.app { flex: 1; min-height: 0; display: flex; }
.sidebar { width: 259px; background: #181818; display: flex; border-right: 1px solid #262626; }
.side-main { width: 245px; display: flex; flex-direction: column; }
.side-list { height: 858px; overflow: hidden; }
.side-head { height: 52px; display: flex; justify-content: space-between; align-items: center; padding: 0 16px; }
.side-head .logo { width: 20px; height: 20px; }
.side-head .panel { width: 20px; height: 20px; color: #a3a3a3; }
.group { padding: 8px 0 12px; }
.group a { height: 36px; display: flex; align-items: center; gap: 6px; padding-left: 16px; font-size: 14px; letter-spacing: -.4px; }
.group a span { padding-bottom: 1px; }
.group a [dir=rtl] { letter-spacing: 0; padding-bottom: 0; }
.group a .loose { letter-spacing: -.02px; }
.group a .bigger { font-size: 15.500px; }
.group svg { width: 20px; height: 20px; }
.group .label { color: #a0a0a0; }
.account { height: 61px; border-top: 1px solid #262626; display: flex; align-items: center; gap: 8px; padding-left: 14px; }
.account p { font-size: 13.500px; line-height: 17px; letter-spacing: -.2px; font-weight: 500; }
.account .plan { font-size: 12px; color: #9c9c9c; font-weight: 400; }
.avatar { width: 24px; height: 24px; border-radius: 50%; background: #0066d0; display: grid; place-items: center; font-size: 11px; }
.side-scroll { width: 10px; margin-left: 3px; display: flex; flex-direction: column; align-items: center; padding: 6px 0 7px; }
.up { border: 5px solid transparent; border-top: 0; border-bottom-color: #333; }
.down { border: 5px solid transparent; border-bottom: 0; border-top-color: #444; margin-top: auto; }
.side-scroll .thumb { width: 9px; height: 495px; border-radius: 5px; background: #303030; margin-top: 7px; }

/* conversation */
.main { flex: 1; position: relative; display: flex; flex-direction: column; align-items: center; }
.top { position: absolute; z-index: 2; left: 0; right: 18px; top: 0; height: 52px; display: flex; justify-content: space-between; align-items: center; padding-left: 19px; }
.model { font-size: 18px; letter-spacing: -.65px; display: flex; align-items: center; gap: 5px; }
.model span { color: #a5a5a5; }
.model svg { width: 11px; height: 11px; margin-left: 1px; color: #a5a5a5; }
.share { display: flex; align-items: center; gap: 7px; font-size: 14px; }
.share b { letter-spacing: -.6px; }
.share svg { width: 18px; height: 18px; }
.share .dots { margin-left: 16px; width: 16px; }

.thread { width: 768px; flex: 1; overflow: hidden; font-size: 16px; line-height: 28px; }
.bubble { width: 538px; height: 37px; padding: 0 16px; background: #303030; border-radius: 0 0 22px 22px; line-height: 27px; }
article { padding-top: 59px; }
article p { margin-bottom: 16px; }
b { font-weight: 600; letter-spacing: -.45px; }
b.ar { letter-spacing: 0; }
b.path { letter-spacing: -.28px; }
b.path i { font: 400 15px "Liberation Sans", sans-serif; }
hr { border: 0; border-top: 1px solid #424242; margin: 28px 0 27px; }
h2 { font-size: 20px; font-weight: 600; line-height: 32px; margin-bottom: 5px; display: flex; align-items: center; }
h2.numbered { margin: 0 0 1px; }
h3 { font-size: 18px; font-weight: 600; line-height: 28px; margin-bottom: 4px; display: flex; align-items: center; }
h3 bdi { letter-spacing: -.5px; }
ul { list-style: none; }
li { padding-right: 32px; position: relative; }
li::before { content: ""; position: absolute; right: 8px; top: 11px; width: 6px; height: 6px; border-radius: 50%; background: #fff; }
article > ul { margin-bottom: 16px; }
code { font: 500 12.800px "DejaVu Sans Mono", monospace; background: #424242; border-radius: 4px; padding: 3px 4px; }
.gem { width: 9.500px; height: 9.500px; background: #0078d7; transform: rotate(45deg); margin: 0 6px 0 10px; outline: 1px solid #0a0a0a; }
.gem.big { width: 10.500px; height: 10.500px; margin-left: 12px; }
.emoji { font-size: 15px; }

.dock { position: absolute; left: 446px; width: 770px; bottom: 0; height: 88px; background: #212121; display: flex; flex-direction: column; align-items: center; }
.jump { position: absolute; top: -57px; width: 32px; height: 32px; border-radius: 50%; background: #212121; border: 1px solid #3b3b3b; display: grid; place-items: center; }
.jump svg { width: 18px; height: 18px; }
.composer { flex: none; width: 768px; height: 56px; border-radius: 28px; background: #303030; display: flex; align-items: center; padding: 0 10px 0 18px; font-size: 16px; }
.composer svg { width: 20px; height: 20px; }
.ph { flex: 1; margin-left: 14px; border-left: 1px solid #fff; line-height: 22px; color: #a0a0a0; letter-spacing: -.35px; }
.voice { width: 36px; height: 36px; margin-left: 14px; border-radius: 50%; background: #474747; display: grid; place-items: center; }
.note { padding-top: 1px; line-height: 32px; letter-spacing: -.33px; }
.page-scroll { position: absolute; right: 2px; top: 0; bottom: 0; width: 10px; display: flex; flex-direction: column; align-items: center; padding: 6px 0 67px; }
.page-scroll .thumb { width: 9px; height: 71px; border-radius: 5px; background: #424242; margin-top: 738px; }

/* taskbar */
.taskbar { height: 40px; background: linear-gradient(90deg, #28313c, #2b3338 20%, #35362c 36%, #2a323a 46%, #31352d 54%, #2a303a 62%, #28323c 78%, #2d3230 88%, #272f38); display: flex; }
.start { width: 48px; display: grid; place-items: center; }
.start svg { width: 16px; height: 16px; }
.search { width: 344px; height: 40px; background: #f2f2f2; border: 1px solid #c4c4c4; color: #2b2b2b; display: flex; align-items: center; padding-left: 11px; font-size: 15px; letter-spacing: -.5px; overflow: hidden; }
.search .mag { width: 18px; height: 18px; margin-right: 10px; }
.sport { width: 60px; height: 38px; margin-left: auto; margin-right: 6px; }
.pins { display: flex; }
.pins > span { width: 49.100px; height: 40px; display: grid; place-items: center; position: relative; }
.pins svg { width: 18px; height: 18px; }
.pins svg.l { width: 24px; height: 24px; }
.run::after { content: ""; position: absolute; left: 5px; right: 4px; bottom: 0; height: 2px; background: #76b9ed; }
.pins .on { background: #5d6163; }
.pins .on::after { left: 0; right: 0; }
.badge { position: absolute; font-size: 12px; line-height: 18px; font-weight: 600; background: #333; border: 1px solid #999; border-radius: 10px; }
.pins .badge { left: 28px; top: 17px; padding: 0 2px; letter-spacing: -.5px; }
.tray { margin-left: auto; display: grid; align-items: center; justify-items: center; grid-template-columns: 26px 148px 38px 21px 24px 26px 20px 40px 60px 46px 9px; }
.tray svg { width: 16px; height: 16px; }
.tray .umb { width: 24px; height: 24px; }
.tray .t1 { margin-left: 6px; }
.weather { font-size: 14px; }
.lang { font-size: 14px; }
.clock { display: grid; justify-items: center; font-size: 12px; line-height: 18px; letter-spacing: -.4px; }
.notif { position: relative; }
.tray .notif svg { width: 18px; height: 18px; }
.notif .badge { left: 8px; top: 7px; width: 17px; line-height: 15px; text-align: center; font-size: 11px; }
```
